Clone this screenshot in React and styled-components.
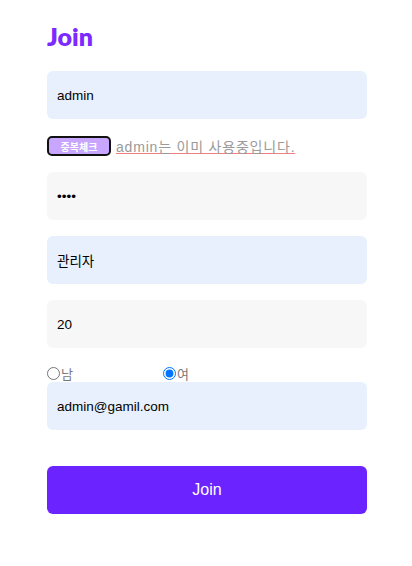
import React from 'react';
import styled, { createGlobalStyle } from 'styled-components';

const GlobalStyle = createGlobalStyle`
    body {
        margin: 0;
        background: #fff;
        font-family: "Liberation Sans", "Noto Sans CJK KR", sans-serif;
    }
`;

function App() {
    return (
        <>
            <GlobalStyle />
            <Wrapper>
                <Title>Join</Title>
                <Field $fill="#e8f0fe" defaultValue="admin" />
                <CheckRow>
                    <CheckButton type="button">중복체크</CheckButton>
                    <Notice>admin는 이미 사용중입니다.</Notice>
                </CheckRow>
                <Field type="password" defaultValue="1234" />
                <Field $fill="#e8f0fe" defaultValue="관리자" />
                <Field defaultValue="20" />
                <RadioRow>
                    <RadioLabel>
                        <input type="radio" name="gender" />남
                    </RadioLabel>
                    <RadioLabel>
                        <input type="radio" name="gender" defaultChecked />여
                    </RadioLabel>
                </RadioRow>
                <Field $fill="#e8f0fe" defaultValue="admin@gamil.com" />
                <SubmitButton type="button">Join</SubmitButton>
            </Wrapper>
        </>
    );
}

export default App;

const Wrapper = styled.div`
    width: 320px;
    margin-left: 47px;
    padding-top: 21px;
    display: flex;
    flex-direction: column;
`;

const Title = styled.h1`
    margin: 0 0 20px;
    font-family: "Lato", "Noto Sans", sans-serif;
    font-weight: 800;
    font-size: 25px;
    line-height: 30px;
    color: #7b2bff;
`;

const Field = styled.input`
    box-sizing: border-box;
    width: 100%;
    height: 48px;
    margin-bottom: 16px;
    padding: 0 10px;
    border: none;
    border-radius: 6px;
    background: ${({ $fill }) => $fill || '#f7f7f7'};
    font-family: "Liberation Sans", "Noto Sans CJK KR", sans-serif;
    font-size: 13.5px;
    color: #000;
    outline: none;
`;

const CheckRow = styled.div`
    display: flex;
    align-items: center;
    gap: 5px;
    margin: 1px 0 16px;
    height: 20px;
`;

const CheckButton = styled.button`
    box-sizing: border-box;
    width: 64px;
    height: 20px;
    padding: 0;
    border: 2px solid #111;
    border-radius: 5px;
    background: #c8a6ff;
    color: #fff;
    font-family: "Noto Sans CJK KR", sans-serif;
    font-weight: 700;
    font-size: 10px;
`;

const Notice = styled.span`
    font-family: "Liberation Sans", "Noto Sans CJK KR", sans-serif;
    font-size: 14px;
    letter-spacing: 0.8px;
    color: #9a9a9a;
    text-decoration: underline;
    text-decoration-color: #f08080;
`;

const RadioRow = styled.div`
    display: flex;
    align-items: center;
    height: 18px;
`;

const RadioLabel = styled.label`
    display: flex;
    align-items: center;
    width: 116px;
    font-family: "Noto Sans CJK KR", sans-serif;
    font-size: 13px;
    color: #777;

    input {
        margin: 0 1px 0 0;
        width: 13px;
        height: 13px;
    }
`;

const SubmitButton = styled.button`
    height: 48px;
    margin-top: 20px;
    border: none;
    border-radius: 6px;
    background: #6b24ff;
    color: #fff;
    font-family: "Liberation Sans", sans-serif;
    font-size: 16px;
`;
